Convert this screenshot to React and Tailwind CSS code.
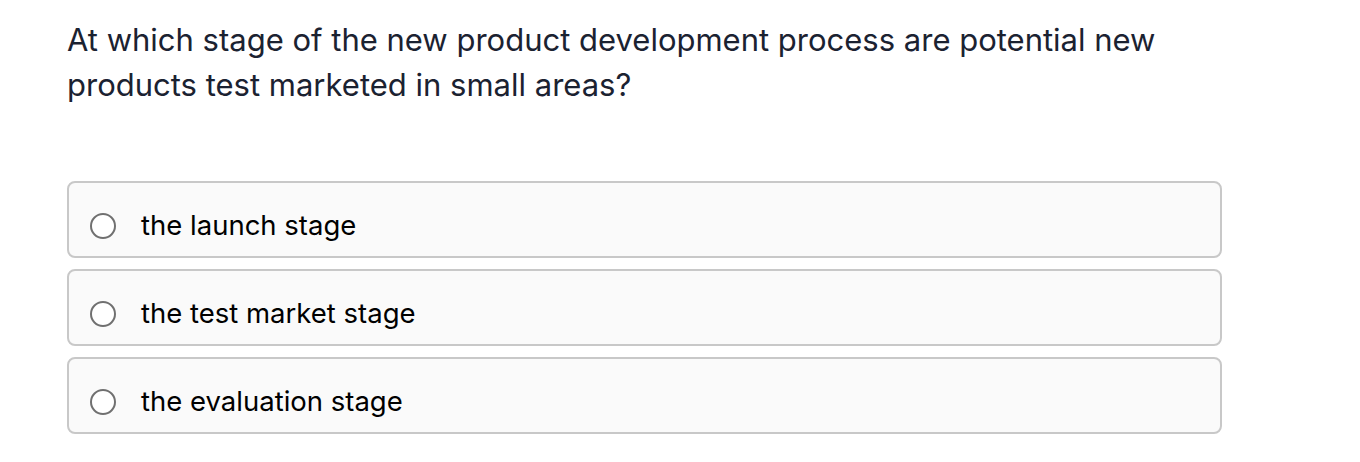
export default function App() {
  const options = ['the launch stage', 'the test market stage', 'the evaluation stage'];
  return (
    <div className="min-h-screen bg-white pl-[67px] pr-[139px] pt-[17px]" style={{ fontFamily: 'Inter, "Noto Sans", sans-serif' }}>
      <h2 className="text-[31px] leading-[45px] text-[#1b2231] font-normal">
        At which stage of the new product development process are potential new products test marketed in small areas?
      </h2>
      <div className="mt-[74px] flex flex-col gap-[11px] w-[1155px]">
        {options.map((o) => (
          <label key={o} className="flex items-center h-[77px] rounded-lg border-2 border-[#c8c8c8] bg-[#fafafa] pl-[21px] pt-3">
            <span className="w-[26px] h-[26px] rounded-full border-2 border-[#707070] bg-white shrink-0" />
            <span className="ml-[25px] text-[27.5px] text-black">{o}</span>
          </label>
        ))}
      </div>
    </div>
  );
}
